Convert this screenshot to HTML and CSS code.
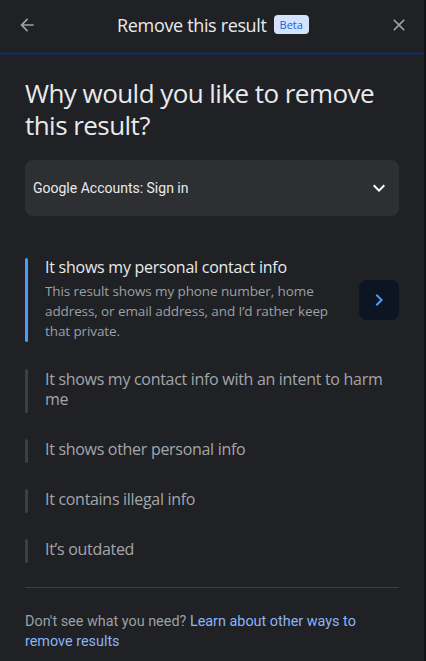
FILE: index.html
```html
<!DOCTYPE html>
<html lang="en">
<head>
<meta charset="utf-8">
<title>Remove this result</title>
<link rel="stylesheet" href="styles.css">
</head>
<body>
<div class="page">
  <header class="topbar">
    <button class="icon-btn" aria-label="Back">
      <svg width="20" height="20" viewBox="0 0 24 24"><path d="M20 11H7.83l5.59-5.59L12 4l-8 8 8 8 1.41-1.41L7.83 13H20v-2z" fill="currentColor"/></svg>
    </button>
    <div class="title-group">
      <span class="title">Remove this result</span>
      <span class="chip">Beta</span>
    </div>
    <button class="icon-btn" aria-label="Close">
      <svg width="20" height="20" viewBox="0 0 24 24"><path d="M19 6.41 17.59 5 12 10.59 6.41 5 5 6.41 10.59 12 5 17.59 6.41 19 12 13.41 17.59 19 19 17.59 13.41 12z" fill="currentColor"/></svg>
    </button>
  </header>

  <main class="content">
    <h1 class="heading">Why would you like to remove this result?</h1>

    <div class="dropdown">
      <span class="dropdown-label">Google Accounts: Sign in</span>
      <svg class="dropdown-chev" width="24" height="24" viewBox="0 0 24 24"><path d="M16.59 8.59 12 13.17 7.41 8.59 6 10l6 6 6-6z" fill="currentColor"/></svg>
    </div>

    <ul class="options">
      <li class="option selected">
        <span class="bar"></span>
        <div class="option-body">
          <div class="option-title">It shows my personal contact info</div>
          <div class="option-desc">This result shows my phone number, home address, or email address, and I’d rather keep that private.</div>
        </div>
        <button class="next-btn" aria-label="Next">
          <svg width="24" height="24" viewBox="0 0 24 24"><path d="M10 6 8.59 7.41 13.17 12l-4.58 4.59L10 18l6-6z" fill="currentColor"/></svg>
        </button>
      </li>
      <li class="option">
        <span class="bar"></span>
        <div class="option-body"><div class="option-text">It shows my contact info with an intent to harm me</div></div>
      </li>
      <li class="option">
        <span class="bar"></span>
        <div class="option-body"><div class="option-text">It shows other personal info</div></div>
      </li>
      <li class="option">
        <span class="bar"></span>
        <div class="option-body"><div class="option-text">It contains illegal info</div></div>
      </li>
      <li class="option">
        <span class="bar"></span>
        <div class="option-body"><div class="option-text">It’s outdated</div></div>
      </li>
    </ul>

    <hr class="divider">

    <p class="footer-text">Don't see what you need? <a href="#" class="link">Learn about other ways to remove results</a></p>
  </main>
</div>
</body>
</html>
```

FILE: styles.css
```css
* { box-sizing: border-box; }

html, body {
  margin: 0;
  padding: 0;
  background: #202124;
}

.page {
  width: 426px;
  min-height: 661px;
  background: #202124;
  border-right: 2px solid #111214;
  font-family: "Open Sans", "Noto Sans", sans-serif;
  color: #e8eaed;
}

.topbar {
  height: 55px;
  display: flex;
  align-items: center;
  justify-content: space-between;
  padding: 0 14px 3px 16px;
  border-bottom: 3px solid #172a4a;
}

.icon-btn {
  width: 20px;
  height: 20px;
  padding: 0;
  border: 0;
  background: none;
  color: #9aa0a6;
  display: flex;
  align-items: center;
  justify-content: center;
  margin: 0 1px;
}
.icon-btn svg { display: block; }

.title-group {
  display: flex;
  align-items: center;
  gap: 7px;
  margin-left: 0;
}

.title {
  font-size: 18px;
  font-weight: 500;
  color: #e8eaed;
  letter-spacing: -0.35px;
}

.chip {
  font-size: 11px;
  line-height: 19px;
  height: 19px;
  padding: 0 6px;
  border-radius: 4px;
  background: #d3e3fd;
  color: #1a5fd8;
}

.content {
  padding: 22px 25px 20px 25px;
}

.heading {
  margin: 0;
  font-size: 26px;
  line-height: 32px;
  font-weight: 400;
  color: #e8eaed;
  letter-spacing: -0.55px;
}

.dropdown {
  margin-top: 19px;
  height: 56px;
  border-radius: 8px;
  background: #2e2f33;
  display: flex;
  align-items: center;
  justify-content: space-between;
  padding: 0 8px;
}

.dropdown-label {
  font-family: Roboto, "Liberation Sans", sans-serif;
  font-size: 14px;
  font-weight: 400;
  color: #e8eaed;
}

.dropdown-chev { color: #ffffff; display: block; }

.options {
  list-style: none;
  margin: 42px 0 0 0;
  padding: 0;
  display: flex;
  flex-direction: column;
  gap: 26px;
}

.option {
  display: flex;
  align-items: stretch;
}

.option .bar {
  flex: 0 0 3px;
  width: 3px;
  border-radius: 2px;
  background: #3c4043;
}

.option.selected .bar { background: #4a9cff; }

.option-body {
  flex: 1;
  padding: 0 0 4px 17px;
}

.option.selected .option-body {
  padding: 0 20px 1px 17px;
}

.option.selected { margin-bottom: 1px; }

.option-title {
  font-size: 16px;
  line-height: 20px;
  font-weight: 500;
  color: #e8eaed;
  letter-spacing: -0.25px;
  margin-top: -1px;
  margin-bottom: 1px;
}

.option-desc {
  margin-top: 4px;
  font-size: 13.5px;
  line-height: 20px;
  color: #9aa0a6;
  letter-spacing: -0.1px;
}

.option-text {
  font-size: 16px;
  line-height: 20px;
  color: #a3a6ab;
  letter-spacing: -0.3px;
}

.next-btn {
  align-self: center;
  flex: 0 0 40px;
  width: 40px;
  height: 40px;
  border: 0;
  border-radius: 8px;
  background: #0d1422;
  color: #4a9cff;
  display: flex;
  align-items: center;
  justify-content: center;
  padding: 0;
}
.next-btn svg { display: block; }

.divider {
  margin: 24px 0 0 0;
  border: 0;
  height: 1px;
  background: #3c4043;
}

.footer-text {
  margin: 24px 0 0 0;
  font-family: Roboto, "Liberation Sans", sans-serif;
  font-size: 14.4px;
  line-height: 20px;
  color: #9aa0a6;
}

.link {
  color: #8ab4f8;
  text-decoration: none;
}
```
